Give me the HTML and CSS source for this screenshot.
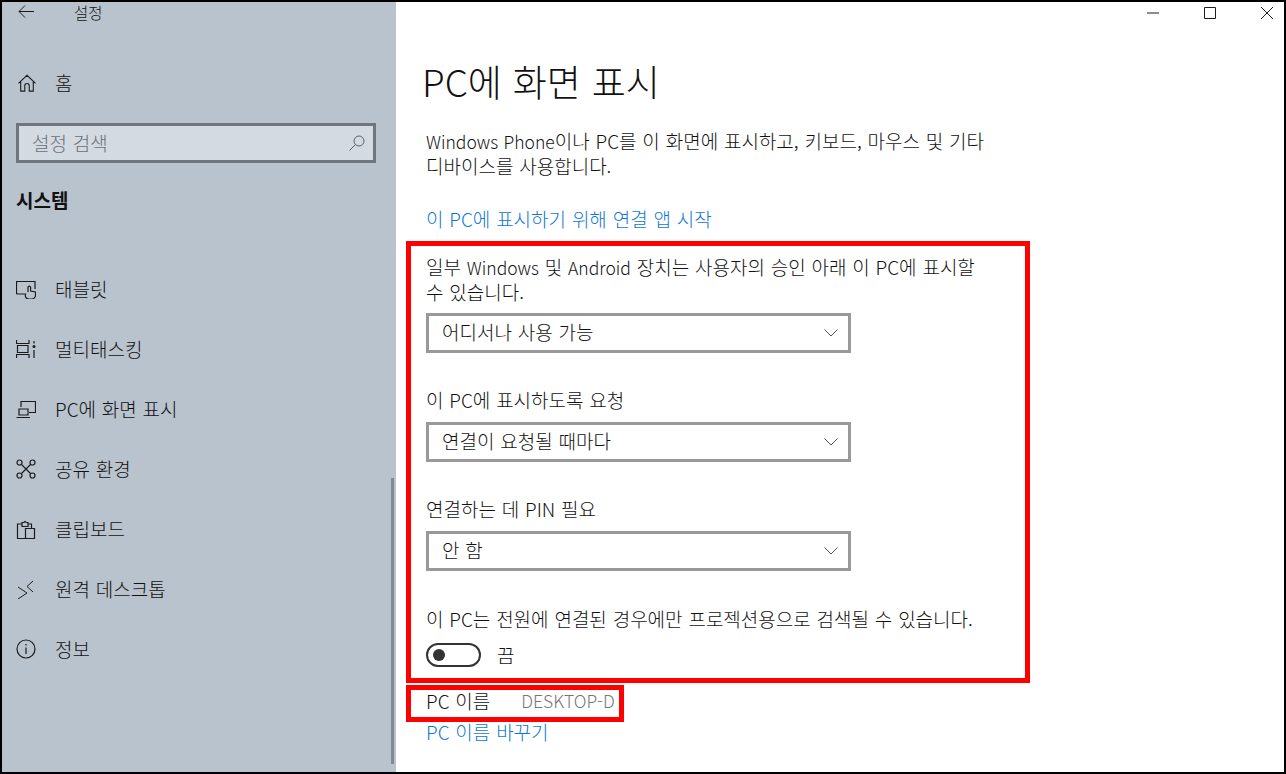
FILE: index.html
```html
<!DOCTYPE html>
<html lang="ko">
<head>
  <meta charset="UTF-8">
  <title>설정</title>
  <link rel="stylesheet" href="styles.css">
</head>
<body>
  <div class="window">
    <aside class="sidebar">
      <div class="titlebar">
        <svg class="back" width="16" height="14" viewBox="0 0 16 14"><path d="M7 .5 1 6.500l6 6M1 6.500h15"/></svg>
        <span>설정</span>
      </div>
      <div class="nav-item home">
        <svg class="icon" width="18" height="18" viewBox="0 0 20 20"><path d="M.5 10.500 10 1.500 19.500 10.500M3 8.500V19H7.500V13Q7.500 10.500 10 10.500T12.500 13V19H17V8.500"/></svg>
        <span>홈</span>
      </div>
      <div class="search">
        <span>설정 검색</span>
        <svg width="16" height="16" viewBox="0 0 16 16"><circle cx="10" cy="6" r="5"/><path d="M6.500 9.500 .5 15.500"/></svg>
      </div>
      <div class="section-title">시스템</div>
      <nav class="nav-list">
        <div class="nav-item">
          <svg class="icon" width="20" height="20" viewBox="0 0 20 20"><path d="M9 15H1.500Q.5 15 .5 14V2.500H19V10"/><path d="M12 13V8.500a1.300 1.300 0 0 1 2.600 0V12L19.500 13V16a4 4 0 0 1-4 4H13.500A3.500 3.500 0 0 1 10 14.500"/></svg>
          <span>태블릿</span>
        </div>
        <div class="nav-item">
          <svg class="icon" width="20" height="20" viewBox="0 0 20 20"><path d="M.5 1V4.500H13V1M.5 19V15.500H13V19M1.500 6.500H12V13.500H1.500ZM18 2V4.500M18 11V19"/><circle class="dot" cx="18" cy="7.500" r="1.500"/></svg>
          <span>멀티태스킹</span>
        </div>
        <div class="nav-item">
          <svg class="icon" width="20" height="20" viewBox="0 0 20 20"><path d="M5 8V2.500H19.500V13.500H13M3 10H12V16H3ZM.5 18.500H14"/></svg>
          <span>PC에 화면 표시</span>
        </div>
        <div class="nav-item">
          <svg class="icon" width="20" height="20" viewBox="0 0 20 20"><circle cx="3.500" cy="3.500" r="2.500"/><circle cx="16.500" cy="3.500" r="2.500"/><circle cx="3.500" cy="16.500" r="2.500"/><circle cx="16.500" cy="16.500" r="2.500"/><path d="M5.500 5.500 14.500 14.500M14.500 5.500 5.500 14.500"/></svg>
          <span>공유 환경</span>
        </div>
        <div class="nav-item">
          <svg class="icon" width="20" height="20" viewBox="0 0 20 20"><path d="M9.500 19.500H1.500V5H6M12 5H15.500V9.500M6 7.500V3.500H8Q9 1 10 3.500H12V7.500ZM9.500 9.500H18.500V19.500H9.500Z"/></svg>
          <span>클립보드</span>
        </div>
        <div class="nav-item">
          <svg class="icon thin" width="20" height="20" viewBox="0 0 20 20"><path d="M2 8 11 14 2 20M17 2 11 7.500 17 13"/></svg>
          <span>원격 데스크톱</span>
        </div>
        <div class="nav-item">
          <svg class="icon" width="20" height="20" viewBox="0 0 20 20"><circle cx="10" cy="10" r="9"/><path d="M10 8.500V15M10 5V6.500"/></svg>
          <span>정보</span>
        </div>
      </nav>
      <div class="scrollbar"></div>
    </aside>

    <main class="content">
      <div class="window-controls">
        <svg width="12" height="12" viewBox="0 0 12 12"><path d="M0 6H12"/></svg>
        <svg width="12" height="12" viewBox="0 0 12 12"><path d="M.5 .5H11.500V11.500H.5Z"/></svg>
        <svg width="12" height="12" viewBox="0 0 12 12"><path d="M0 0 12 12M12 0 0 12"/></svg>
      </div>
      <h1>PC에 화면 표시</h1>
      <p class="intro"><span class="en">Windows Phone</span>이나 PC를 이 화면에 표시하고, 키보드, 마우스 및 기타<br>디바이스를 사용합니다.</p>
      <a class="link launch" href="#">이 PC에 표시하기 위해 연결 앱 시작</a>

      <section class="red-box options">
        <p class="option-text">일부 <span class="en">Windows</span> 및 <span class="en">Android</span> 장치는 사용자의 승인 아래 이 PC에 표시할<br>수 있습니다.</p>
        <div class="select first"><span>어디서나 사용 가능</span><svg width="14" height="8" viewBox="0 0 14 8"><path d="M.5 .5 7 7 13.500 .5"/></svg></div>
        <p class="label">이 PC에 표시하도록 요청</p>
        <div class="select"><span>연결이 요청될 때마다</span><svg width="14" height="8" viewBox="0 0 14 8"><path d="M.5 .5 7 7 13.500 .5"/></svg></div>
        <p class="label">연결하는 데 PIN 필요</p>
        <div class="select"><span>안 함</span><svg width="14" height="8" viewBox="0 0 14 8"><path d="M.5 .5 7 7 13.500 .5"/></svg></div>
        <p class="label power">이 PC는 전원에 연결된 경우에만 프로젝션용으로 검색될 수 있습니다.</p>
        <div class="toggle-row">
          <div class="toggle"><div class="knob"></div></div>
          <span>끔</span>
        </div>
      </section>

      <section class="red-box pc-name">
        <span>PC 이름</span>
        <span class="pc-value">DESKTOP-D</span>
      </section>
      <a class="link rename" href="#">PC 이름 바꾸기</a>
    </main>
  </div>
</body>
</html>
```

FILE: styles.css
```css
* {
  margin: 0;
  padding: 0;
  box-sizing: border-box;
}

body {
  width: 1286px;
  height: 774px;
  overflow: hidden;
  font-family: "Noto Sans CJK KR", "Open Sans", sans-serif;
  font-size: 19px;
  font-weight: 300;
  line-height: 24px;
  word-spacing: .5px;
  color: #111;
  background: #fff;
}

svg {
  fill: none;
  stroke: #1c1c1c;
  stroke-width: 1;
  flex-shrink: 0;
}

.en {
  font-size: 17.500px;
  line-height: 1;
}

.window {
  display: flex;
  height: 774px;
  border: 2px solid #000;
}

.sidebar {
  position: relative;
  width: 394px;
  padding-left: 14px;
  background: #b8c3cd;
}

.titlebar {
  display: flex;
  align-items: center;
  height: 20px;
  font-size: 15.500px;
}

.back {
  margin-left: 2px;
  margin-right: 40px;
}

.nav-item {
  display: flex;
  align-items: center;
  height: 60px;
}

.nav-item .icon {
  margin-right: 19px;
  stroke-width: 1.200;
}

.nav-item .thin {
  stroke-width: 1;
}

.dot {
  fill: #1c1c1c;
  stroke: none;
}

.home {
  height: 40px;
  margin-top: 41px;
  padding-left: 2px;
}

.search {
  display: flex;
  align-items: center;
  justify-content: space-between;
  width: 360px;
  height: 40px;
  margin-top: 20px;
  padding: 0 8px 0 13px;
  background: #d4dae2;
  border: 3px solid #70767d;
  color: #6d7176;
}

.search svg {
  stroke: #5e6268;
}

.section-title {
  margin-top: 23px;
  font-weight: 700;
  line-height: 28px;
}

.nav-list {
  margin-top: 45px;
}

.scrollbar {
  position: absolute;
  right: 2px;
  top: 476px;
  width: 3px;
  height: 286px;
  background: #84898e;
}

.content {
  position: relative;
  flex: 1;
  padding-left: 10px;
}

.window-controls {
  position: absolute;
  top: 5px;
  right: 11px;
  display: flex;
  gap: 45px;
}

h1 {
  margin: 55px 0 0 16px;
  font-size: 37px;
  font-weight: 300;
  line-height: 48px;
}

.intro {
  height: 49px;
  margin: 23px 0 0 20px;
  line-height: 25px;
  white-space: nowrap;
}

.link {
  display: block;
  color: #0f78d4;
  text-decoration: none;
}

.launch {
  margin: 30px 0 0 20px;
}

.red-box {
  border: 5px solid #f00;
}

.options {
  width: 624px;
  height: 442px;
  margin-top: 10px;
  padding: 8px 15px 0;
}

.option-text {
  height: 50px;
  line-height: 25px;
  white-space: nowrap;
}

.select {
  display: flex;
  align-items: center;
  justify-content: space-between;
  width: 425px;
  height: 40px;
  padding: 0 10px 0 13px;
  border: 3px solid #999;
}

.select span {
  margin-bottom: 3px;
}

.select svg {
  stroke: #555;
}

.first {
  margin-top: 9px;
}

.label {
  margin-top: 35px;
  margin-bottom: 10px;
}

.power {
  margin-top: 36px;
  margin-bottom: 12px;
}

.toggle-row {
  display: flex;
  align-items: center;
  gap: 16px;
}

.toggle {
  width: 55px;
  height: 24px;
  padding: 4px 0 0 5px;
  border: 2px solid #333;
  border-radius: 12px;
}

.knob {
  width: 12px;
  height: 12px;
  border-radius: 50%;
  background: #333;
}

.pc-name {
  display: flex;
  align-items: center;
  gap: 31px;
  width: 218px;
  height: 37px;
  margin-top: 2px;
  padding: 0 0 5px 15px;
  white-space: nowrap;
}

.pc-value {
  color: #767676;
  font-size: 17.500px;
}

.rename {
  margin: -2px 0 0 20px;
}
```
